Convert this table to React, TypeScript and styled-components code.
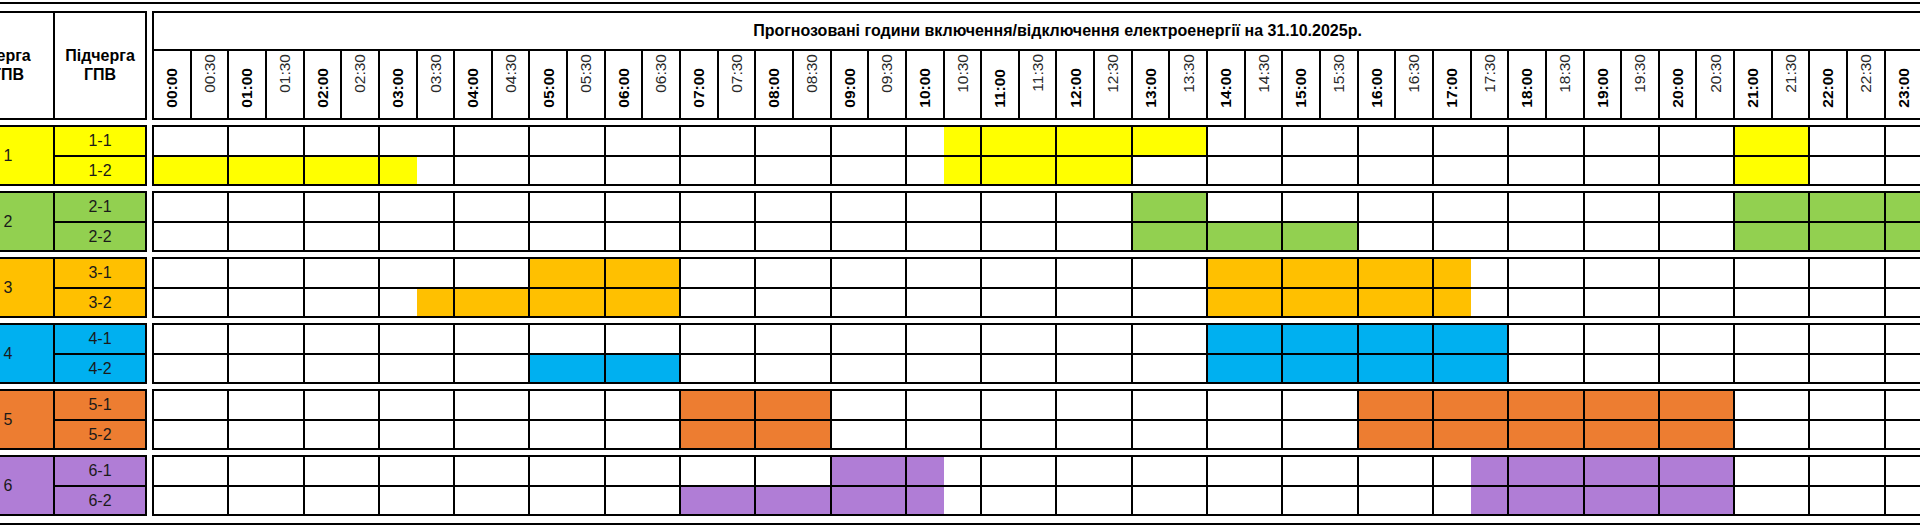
import React from "react";
import styled, { createGlobalStyle } from "styled-components";

const GlobalStyle = createGlobalStyle`
  *, *::before, *::after { box-sizing: border-box; }
  html, body { margin: 0; padding: 0; background: #fff; overflow: hidden; }
  body { font-family: "Liberation Sans", Arial, sans-serif; color: #000; }
`;

type Group = {
  id: number;
  color: string;
  subs: { name: string; off: [number, number][] }[];
};

const GROUPS: Group[] = [
  { id: 1, color: "#ffff00", subs: [
    { name: "1-1", off: [[21, 28], [42, 44]] },
    { name: "1-2", off: [[0, 7], [21, 26], [42, 44]] },
  ] },
  { id: 2, color: "#92d050", subs: [
    { name: "2-1", off: [[26, 28], [42, 48]] },
    { name: "2-2", off: [[26, 32], [42, 48]] },
  ] },
  { id: 3, color: "#ffc000", subs: [
    { name: "3-1", off: [[10, 14], [28, 35]] },
    { name: "3-2", off: [[7, 14], [28, 35]] },
  ] },
  { id: 4, color: "#00b0f0", subs: [
    { name: "4-1", off: [[28, 36]] },
    { name: "4-2", off: [[10, 14], [28, 36]] },
  ] },
  { id: 5, color: "#ed7d31", subs: [
    { name: "5-1", off: [[14, 18], [32, 42]] },
    { name: "5-2", off: [[14, 18], [32, 42]] },
  ] },
  { id: 6, color: "#b07dd6", subs: [
    { name: "6-1", off: [[18, 21], [35, 42]] },
    { name: "6-2", off: [[14, 21], [35, 42]] },
  ] },
];

const HALVES = Array.from({ length: 48 }, (_, i) => {
  const h = String(Math.floor(i / 2)).padStart(2, "0");
  return { label: `${h}:${i % 2 ? "30" : "00"}`, hour: i % 2 === 0 };
});

const isOff = (off: [number, number][], i: number) =>
  off.some(([a, b]) => i >= a && i < b);

const Frame = styled.div`
  width: max-content;
  margin: 2px 0 0 -48px;
  border: 2px solid #000;
  padding: 7px;
  display: flex;
  flex-direction: column;
  gap: 5px;
`;

const Block = styled.div`
  display: flex;
  gap: 5px;
`;

const LeftBox = styled.div<{ $header?: boolean }>`
  display: grid;
  grid-template-columns: 90px 92px;
  grid-template-rows: ${(p) => (p.$header ? "105px" : "28px 29px")};
  border: 2px solid #000;
`;

const HeadCell = styled.div<{ $divider?: boolean }>`
  display: flex;
  align-items: center;
  justify-content: center;
  text-align: center;
  font-weight: 700;
  font-size: 16px;
  line-height: 18.5px;
  border-left: ${(p) => (p.$divider ? "2px solid #000" : "none")};
`;

const QueueCell = styled.div<{ $bg: string }>`
  grid-row: span 2;
  display: flex;
  align-items: center;
  justify-content: center;
  background: ${(p) => p.$bg};
  font-size: 16px;
  color: #1a1a1a;
`;

const SubCell = styled.div<{ $bg: string; $second?: boolean }>`
  display: flex;
  align-items: center;
  justify-content: center;
  background: ${(p) => p.$bg};
  border-left: 2px solid #000;
  border-top: ${(p) => (p.$second ? "2px solid #000" : "none")};
  font-size: 16px;
  color: #1a1a1a;
`;

const GridBox = styled.div`
  width: 1809px;
  border: 2px solid #000;
  border-right: none;
  display: flex;
  flex-direction: column;
`;

const TitleRow = styled.div`
  height: 38px;
  border-bottom: 2px solid #000;
  display: flex;
  align-items: center;
  justify-content: center;
  font-weight: 700;
  font-size: 16px;
`;

const TimeRow = styled.div`
  height: 67px;
  display: grid;
  grid-template-columns: repeat(48, 1fr);
`;

const TimeCell = styled.div<{ $hour: boolean }>`
  border-right: 2px solid #000;
  display: flex;
  flex-direction: column;
  align-items: center;
  justify-content: ${(p) => (p.$hour ? "flex-end" : "flex-start")};
  padding: ${(p) => (p.$hour ? "0 0 10px" : "3px 0 0")};
`;

const TimeLabel = styled.span<{ $hour: boolean }>`
  writing-mode: vertical-rl;
  transform: rotate(180deg);
  font-size: 15.5px;
  line-height: 1;
  font-weight: ${(p) => (p.$hour ? 700 : 400)};
  color: ${(p) => (p.$hour ? "#000" : "#2a2a2a")};
  white-space: nowrap;
`;

const BodyRow = styled.div<{ $second?: boolean }>`
  height: ${(p) => (p.$second ? "29px" : "28px")};
  border-top: ${(p) => (p.$second ? "2px solid #000" : "none")};
  display: grid;
  grid-template-columns: repeat(24, 1fr);
`;

const HourCell = styled.div`
  display: flex;
  border-right: 2px solid #000;
`;

const Half = styled.div<{ $bg: string }>`
  flex: 1;
  background: ${(p) => p.$bg};
`;

export default function App() {
  return (
    <>
      <GlobalStyle />
      <Frame>
        <Block>
          <LeftBox $header>
            <HeadCell>
              Черга
              <br />
              ГПВ
            </HeadCell>
            <HeadCell $divider>
              Підчерга
              <br />
              ГПВ
            </HeadCell>
          </LeftBox>
          <GridBox>
            <TitleRow>
              Прогнозовані години включення/відключення електроенергії на 31.10.2025р.
            </TitleRow>
            <TimeRow>
              {HALVES.map((h) => (
                <TimeCell key={h.label} $hour={h.hour}>
                  <TimeLabel $hour={h.hour}>{h.label}</TimeLabel>
                </TimeCell>
              ))}
            </TimeRow>
          </GridBox>
        </Block>
        {GROUPS.map((g) => (
          <Block key={g.id}>
            <LeftBox>
              <QueueCell $bg={g.color}>{g.id}</QueueCell>
              {g.subs.map((s, si) => (
                <SubCell key={s.name} $bg={g.color} $second={si === 1}>
                  {s.name}
                </SubCell>
              ))}
            </LeftBox>
            <GridBox>
              {g.subs.map((s, si) => (
                <BodyRow key={s.name} $second={si === 1}>
                  {Array.from({ length: 24 }, (_, h) => (
                    <HourCell key={h}>
                      <Half $bg={isOff(s.off, h * 2) ? g.color : "#fff"} />
                      <Half $bg={isOff(s.off, h * 2 + 1) ? g.color : "#fff"} />
                    </HourCell>
                  ))}
                </BodyRow>
              ))}
            </GridBox>
          </Block>
        ))}
      </Frame>
    </>
  );
}
